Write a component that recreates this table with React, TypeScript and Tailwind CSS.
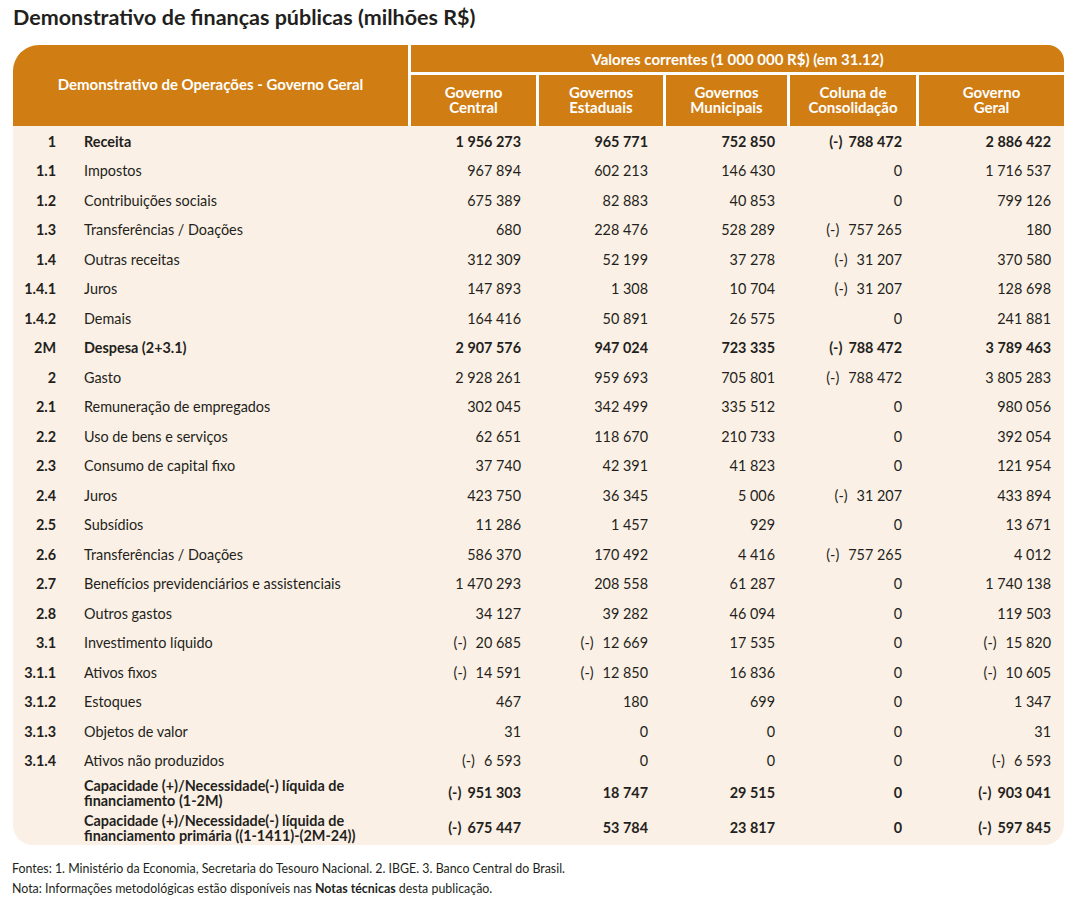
import React from "react";

type Row = {
  code: string;
  label: React.ReactNode;
  vals: string[];
  bold?: boolean;
  tall?: boolean;
};

const ROWS: Row[] = [
  { code: "1", label: "Receita", vals: ["1 956 273", "965 771", "752 850", "-788 472", "2 886 422"], bold: true },
  { code: "1.1", label: "Impostos", vals: ["967 894", "602 213", "146 430", "0", "1 716 537"] },
  { code: "1.2", label: "Contribuições sociais", vals: ["675 389", "82 883", "40 853", "0", "799 126"] },
  { code: "1.3", label: "Transferências / Doações", vals: ["680", "228 476", "528 289", "-757 265", "180"] },
  { code: "1.4", label: "Outras receitas", vals: ["312 309", "52 199", "37 278", "-31 207", "370 580"] },
  { code: "1.4.1", label: "Juros", vals: ["147 893", "1 308", "10 704", "-31 207", "128 698"] },
  { code: "1.4.2", label: "Demais", vals: ["164 416", "50 891", "26 575", "0", "241 881"] },
  { code: "2M", label: "Despesa (2+3.1)", vals: ["2 907 576", "947 024", "723 335", "-788 472", "3 789 463"], bold: true },
  { code: "2", label: "Gasto", vals: ["2 928 261", "959 693", "705 801", "-788 472", "3 805 283"] },
  { code: "2.1", label: "Remuneração de empregados", vals: ["302 045", "342 499", "335 512", "0", "980 056"] },
  { code: "2.2", label: "Uso de bens e serviços", vals: ["62 651", "118 670", "210 733", "0", "392 054"] },
  { code: "2.3", label: "Consumo de capital fixo", vals: ["37 740", "42 391", "41 823", "0", "121 954"] },
  { code: "2.4", label: "Juros", vals: ["423 750", "36 345", "5 006", "-31 207", "433 894"] },
  { code: "2.5", label: "Subsídios", vals: ["11 286", "1 457", "929", "0", "13 671"] },
  { code: "2.6", label: "Transferências / Doações", vals: ["586 370", "170 492", "4 416", "-757 265", "4 012"] },
  { code: "2.7", label: "Benefícios previdenciários e assistenciais", vals: ["1 470 293", "208 558", "61 287", "0", "1 740 138"] },
  { code: "2.8", label: "Outros gastos", vals: ["34 127", "39 282", "46 094", "0", "119 503"] },
  { code: "3.1", label: "Investimento líquido", vals: ["-20 685", "-12 669", "17 535", "0", "-15 820"] },
  { code: "3.1.1", label: "Ativos fixos", vals: ["-14 591", "-12 850", "16 836", "0", "-10 605"] },
  { code: "3.1.2", label: "Estoques", vals: ["467", "180", "699", "0", "1 347"] },
  { code: "3.1.3", label: "Objetos de valor", vals: ["31", "0", "0", "0", "31"] },
  { code: "3.1.4", label: "Ativos não produzidos", vals: ["-6 593", "0", "0", "0", "-6 593"] },
  {
    code: "",
    label: (<>Capacidade (+)/Necessidade(-) líquida de<br />financiamento (1-2M)</>),
    vals: ["-951 303", "18 747", "29 515", "0", "-903 041"],
    bold: true,
    tall: true,
  },
  {
    code: "",
    label: (<>Capacidade (+)/Necessidade(-) líquida de<br />financiamento primária ((1-1411)-(2M-24))</>),
    vals: ["-675 447", "53 784", "23 817", "0", "-597 845"],
    bold: true,
    tall: true,
  },
];

const COLS = ["Governo\nCentral", "Governos\nEstaduais", "Governos\nMunicipais", "Coluna de\nConsolidação", "Governo\nGeral"];

const PADS = ["pr-[15px]", "pr-[15px]", "pr-[12px]", "pr-[14px]", "pr-[13px]"];

function Num({ v, bold }: { v: string; bold?: boolean }) {
  if (v.startsWith("-")) {
    return (
      <span className="flex items-center justify-end">
        <span className={bold ? "mr-[6px]" : "mr-[9px]"}>(-)</span>
        <span>{v.slice(1)}</span>
      </span>
    );
  }
  return <span>{v}</span>;
}

export default function App() {
  return (
    <div
      className="w-[1076px] h-[900px] bg-white text-[#231f20]"
      style={{ fontFamily: "Lato, 'Open Sans', sans-serif" }}
    >
      <h1 className="pl-[13px] pt-[4px] h-[45px] text-[21.5px] font-bold leading-[26px]">
        Demonstrativo de finanças públicas (milhões R$)
      </h1>

      <div className="ml-[13px] w-[1051px]">
        {/* Header */}
        <div className="grid grid-cols-[395px_125px_124px_121px_126px_145px] gap-x-[3px] gap-y-[3px] text-white font-bold text-[15px]">
          <div className="row-span-2 bg-[#d07d13] rounded-tl-[26px] flex items-center justify-center pb-[2px]">
            Demonstrativo de Operações - Governo Geral
          </div>
          <div className="col-span-5 h-[27px] bg-[#d07d13] rounded-tr-[16px] flex items-center justify-center pt-[1px]">
            Valores correntes (1 000 000 R$) (em 31.12)
          </div>
          {COLS.map((c) => (
            <div
              key={c}
              className="h-[51px] bg-[#d07d13] flex items-center justify-center text-center leading-[15px] whitespace-pre-line pb-[1px]"
            >
              {c}
            </div>
          ))}
        </div>

        {/* Body */}
        <div className="bg-[#fbf0e5] rounded-b-[20px] pt-[1px] text-[14.4px]">
          {ROWS.map((r, i) => (
            <div
              key={i}
              className={
                "grid grid-cols-[395px_125px_124px_121px_126px_145px] gap-x-[3px] items-center " +
                (r.tall ? "h-[34.5px]" : "h-[29.5px]")
              }
            >
              <div className="flex items-center">
                <span className="w-[43px] text-right font-bold">{r.code}</span>
                <span className={"ml-[28px] " + (r.bold ? "font-bold" : "") + (r.tall ? " leading-[15px]" : "")}>
                  {r.label}
                </span>
              </div>
              {r.vals.map((v, j) => (
                <div key={j} className={"flex justify-end " + PADS[j] + (r.bold ? " font-bold" : "")}>
                  <Num v={v} bold={r.bold} />
                </div>
              ))}
            </div>
          ))}
        </div>
      </div>

      <div className="pl-[12px] pt-[14px] text-[12.4px] leading-[20px]">
        <p>Fontes: 1. Ministério da Economia, Secretaria do Tesouro Nacional. 2. IBGE. 3. Banco Central do Brasil.</p>
        <p>
          Nota: Informações metodológicas estão disponíveis nas <span className="font-bold">Notas técnicas</span> desta
          publicação.
        </p>
      </div>
    </div>
  );
}
